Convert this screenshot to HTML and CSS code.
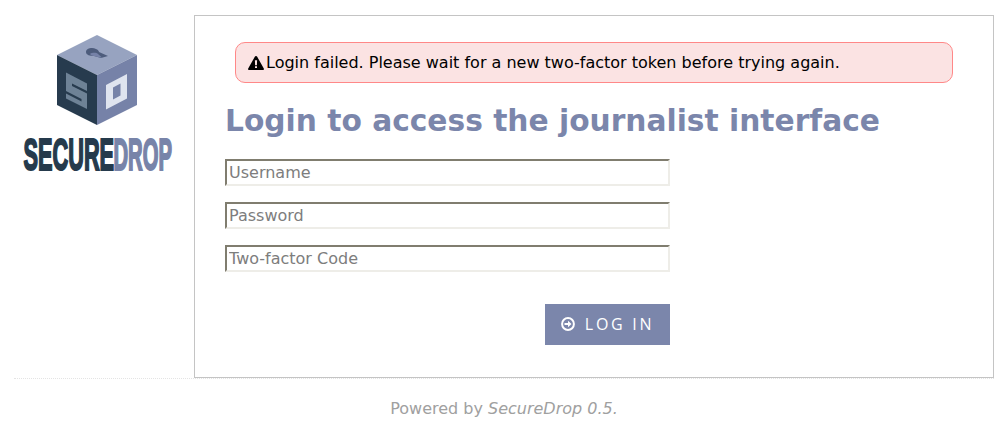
FILE: index.html
```html
<!DOCTYPE html>
<html lang="en">
<head>
<meta charset="utf-8">
<title>SecureDrop | Login</title>
<link rel="stylesheet" href="styles.css">
</head>
<body>
<div class="container">
  <aside class="sidebar">
    <svg class="logo" width="180" height="180" viewBox="0 0 180 180" aria-label="SecureDrop">
      <g transform="translate(-14,-15)">
        <polygon points="97,35 137,55 97,75 57,55" fill="#97a3c0"/>
        <polygon points="57,55 97,75 97,125 57,105" fill="#273b4e"/>
        <polygon points="97,75 137,55 137,105 97,125" fill="#7682a8"/>
        <path d="M86,52 C86,48.500 92,47 96,49 C98.500,50 99,51.500 99,52 L108,56 L101,58 L94,56 C90,56 86,55 86,52 Z" fill="#4d5c7c"/>
        <path d="M90,54 C93,52 97,53 98,54 L102,57.500 L98,57 L94,56 C92,56 91,55 90,54 Z" fill="#7682a8"/>
        <polygon points="66,72.500 87,83.500 87,109 66,98.500" fill="#6e8296"/>
        <polygon points="72,83.500 87,91 87,93.500 72,86" fill="#273b4e"/>
        <polygon points="66,91 81.500,99 81.500,101.500 66,93.500" fill="#273b4e"/>
        <path fill-rule="evenodd" d="M106,85 L127,74 L127,98.500 L106,109.500 Z M113,87.500 L113,99.500 L120.500,95.500 L120.500,83.500 Z" fill="#dfe4ef"/>
        <text class="word word-dark" transform="translate(23.500,169.500) scale(.5,1)">SECURE</text>
        <text class="word word-light" transform="translate(113.500,169.500) scale(.465,1)">DROP</text>
      </g>
    </svg>
  </aside>
  <main class="card">
    <div class="alert">
      <svg class="warn" width="16" height="14" viewBox="0 0 16 14" aria-hidden="true">
        <path fill-rule="evenodd" d="M8,0 C8.500,0 9,.3 9.200,.7 L15.800,12.400 C16.200,13.100 15.700,14 14.900,14 L1.100,14 C.3,14 -.2,13.100 .2,12.400 L6.800,.7 C7,.3 7.500,0 8,0 Z M6.900,4.300 L7.100,9.300 L8.900,9.300 L9.100,4.300 Z M7,10.300 L7,12.100 L9,12.100 L9,10.300 Z" fill="#000"/>
      </svg>
      <span>Login failed. Please wait for a new two-factor token before trying again.</span>
    </div>
    <h1 class="title">Login to access the journalist interface</h1>
    <form class="form">
      <input class="field" type="text" placeholder="Username">
      <input class="field" type="password" placeholder="Password">
      <input class="field" type="text" placeholder="Two-factor Code">
      <button class="submit" type="button">
        <svg width="14" height="14" viewBox="0 0 14 14" aria-hidden="true">
          <circle cx="7" cy="7" r="5.900" fill="none" stroke="#fff" stroke-width="2"/>
          <path d="M3.500,6 L7,6 L7,3.800 L10.500,7 L7,10.200 L7,8 L3.500,8 Z" fill="#fff"/>
        </svg>
        <span>LOG IN</span>
      </button>
    </form>
  </main>
</div>
<footer class="footer">Powered by <em>SecureDrop 0.5.</em></footer>
</body>
</html>
```
FILE: styles.css
```css
* {
  box-sizing: border-box;
}

html,
body {
  margin: 0;
  background: #fff;
}

body {
  font-family: "DejaVu Sans", sans-serif;
  overflow: hidden;
}

.container {
  display: flex;
  width: 980px;
  height: 364px;
  margin: 15px 0 0 14px;
  border-bottom: 1px dotted #e4e4e4;
}

.sidebar {
  flex: 0 0 180px;
}

.logo {
  display: block;
}

.word {
  font-family: "Liberation Sans", sans-serif;
  font-weight: 700;
  font-size: 43.500px;
  stroke-width: 1.600px;
  vector-effect: non-scaling-stroke;
}

.word-dark {
  fill: #253a4c;
  stroke: #253a4c;
}

.word-light {
  fill: #7884a9;
  stroke: #7884a9;
}

.card {
  flex: 0 0 800px;
  height: 363px;
  padding: 26px 40px 0 30px;
  border: 1px solid #c4c4c4;
  background: #fff;
}

.alert {
  display: flex;
  align-items: center;
  gap: 2px;
  height: 41px;
  margin-left: 10px;
  padding: 0 12px;
  border: 1px solid #f88;
  border-radius: 10px;
  background: #fbe3e3;
  color: #000;
  font-size: 16px;
}

.warn {
  flex: none;
}

.title {
  margin: 20px 0 0;
  color: #7b86ab;
  font-size: 29.700px;
  font-weight: 700;
  line-height: 36px;
}

.form {
  display: flex;
  flex-direction: column;
  align-items: stretch;
  gap: 16px;
  width: 445px;
  margin-top: 20px;
}

.field {
  width: 100%;
  height: 27px;
  padding: 1px 2px;
  border-width: 2px;
  border-style: solid;
  border-color: #807d6f #eeede8 #eeede8 #807d6f;
  background: #fff;
  font-family: "DejaVu Sans", sans-serif;
  font-size: 16px;
  outline: none;
}

.field::placeholder {
  color: #7d7d7d;
}

.submit {
  display: flex;
  align-items: center;
  justify-content: center;
  gap: 10px;
  align-self: flex-end;
  width: 125px;
  height: 41px;
  margin-top: 16px;
  padding: 0 0 2px;
  border: 0;
  background: #7b86ab;
  color: #fff;
  font-family: "Open Sans", sans-serif;
  font-size: 16px;
  letter-spacing: 2.700px;
}

.footer {
  margin-top: 21px;
  color: #a0a0a0;
  font-size: 16px;
  line-height: 18px;
  text-align: center;
}
```
